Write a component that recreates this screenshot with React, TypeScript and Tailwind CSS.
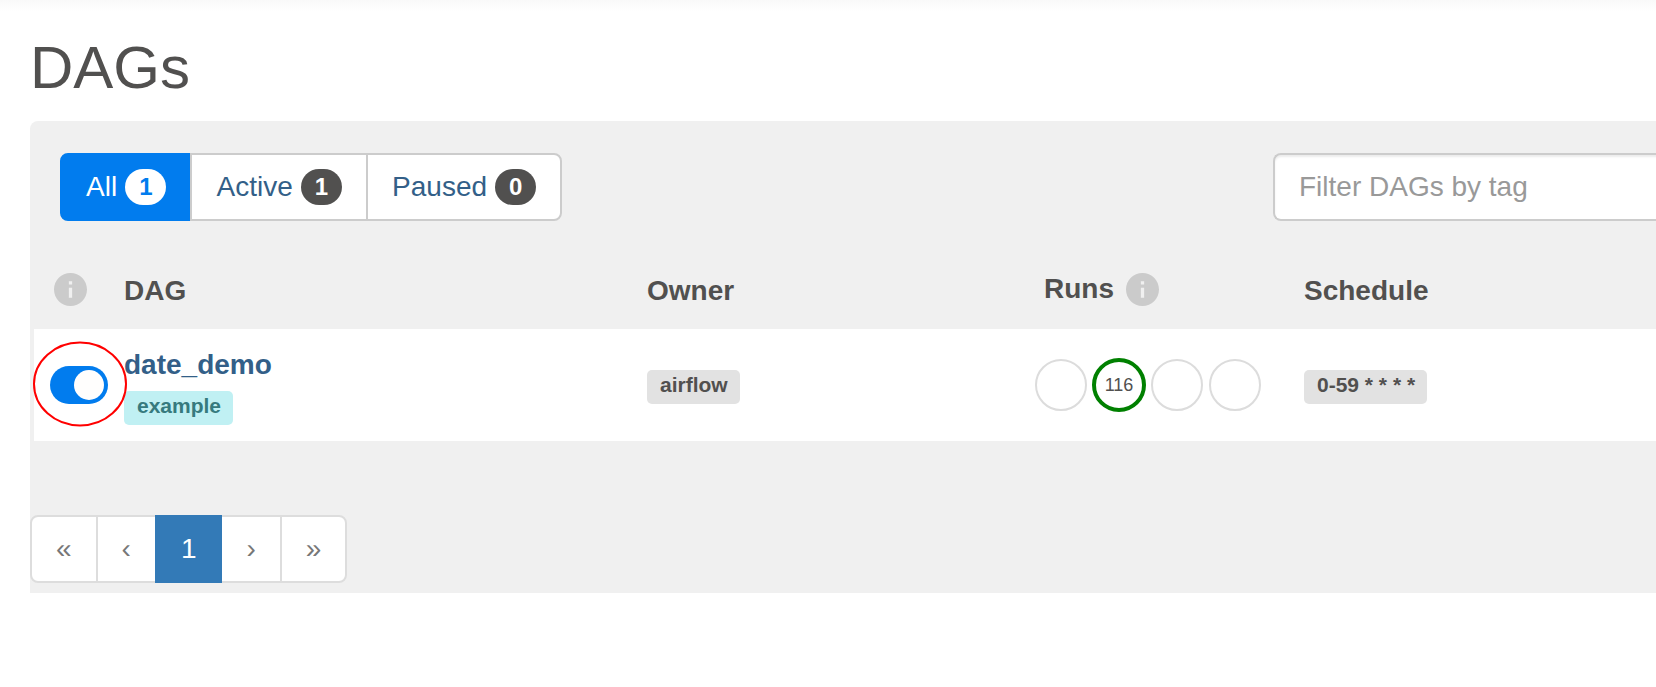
import { useState } from "react";

type Filter = { label: string; count: number };
type Run = { state: string; count?: number };

const filters: Filter[] = [
  { label: "All", count: 1 },
  { label: "Active", count: 1 },
  { label: "Paused", count: 0 },
];

const runs: Run[] = [
  { state: "queued" },
  { state: "success", count: 116 },
  { state: "running" },
  { state: "failed" },
];

function InfoIcon({ label }: { label: string }) {
  return (
    <svg role="img" aria-label={label} viewBox="2 2 20 20" className="size-[33px] shrink-0">
      <path
        fill="#cbcbcb"
        d="M12 2C6.48 2 2 6.48 2 12s4.48 10 10 10 10-4.48 10-10S17.52 2 12 2zm1 15h-2v-6h2v6zm0-8h-2V7h2v2z"
      />
    </svg>
  );
}

function FilterButtons() {
  const [selected, setSelected] = useState("All");
  return (
    <div className="flex">
      {filters.map(({ label, count }) => {
        const active = label === selected;
        return (
          <button
            key={label}
            type="button"
            onClick={() => setSelected(label)}
            className={
              "-ml-0.5 flex h-[68px] items-center gap-2 border-2 px-6 first:ml-0 first:rounded-l-lg last:rounded-r-lg " +
              (active
                ? "border-[#017cee] bg-[#017cee] text-white"
                : "border-[#ccc] bg-white text-[#335f88]")
            }
          >
            <span>{label}</span>
            <span
              className={
                "rounded-[20px] px-3.5 py-1.5 text-2xl/6 font-bold " +
                (active ? "bg-white text-[#017cee]" : "bg-[#51504f] text-white")
              }
            >
              {count}
            </span>
          </button>
        );
      })}
    </div>
  );
}

function Tag({ children, teal = false }: { children: string; teal?: boolean }) {
  return (
    <span
      className={
        "block w-fit rounded-[5px] pt-[3px] pr-3 pb-[7px] pl-[13px] text-[21px]/[24px] font-bold " +
        (teal ? "bg-[#c0f0f3] text-[#367a7e]" : "bg-[#e2e2e2] text-[#51504f]")
      }
    >
      {children}
    </span>
  );
}

function RunCircles() {
  return (
    <svg viewBox="0 0 232 56" className="h-14 w-[232px]" role="img" aria-label="Runs by state">
      {runs.map(({ state, count }, i) => (
        <g key={state}>
          <circle
            cx={26 + i * 58}
            cy="28"
            r="25"
            fill="none"
            stroke={count ? "#008000" : "#dcdcdc"}
            strokeWidth={count ? 4 : 2}
          />
          {count && (
            <text x={26 + i * 58} y="34" textAnchor="middle" fontSize="18" fill="#51504f">
              {count}
            </text>
          )}
        </g>
      ))}
    </svg>
  );
}

function PauseToggle() {
  return (
    <div className="relative ml-4 h-[38px] w-[58px]">
      <label className="block cursor-pointer">
        <input
          type="checkbox"
          defaultChecked
          aria-label="Pause or unpause date_demo"
          className="peer sr-only"
        />
        <span className="flex h-[38px] w-[58px] items-center rounded-full bg-[#cbcbcb] p-1 peer-checked:justify-end peer-checked:bg-[#017cee]">
          <span className="size-[30px] rounded-full bg-[#fffefd]" />
        </span>
      </label>
      <svg
        aria-hidden="true"
        viewBox="0 0 94 86"
        className="pointer-events-none absolute -top-[25px] -left-[17px] h-[86px] w-[94px] max-w-none"
      >
        <ellipse cx="47" cy="43" rx="46" ry="41.5" fill="none" stroke="#ff0000" strokeWidth="2" />
      </svg>
    </div>
  );
}

const pages = [
  { text: "«", label: "First page" },
  { text: "‹", label: "Previous page" },
  { text: "1", label: "Page 1" },
  { text: "›", label: "Next page" },
  { text: "»", label: "Last page" },
];

function Pagination() {
  return (
    <nav aria-label="Pagination" className="flex">
      {pages.map(({ text, label }) => (
        <a
          key={label}
          href="#"
          aria-label={label}
          className={
            "-ml-0.5 flex h-[68px] items-center border-2 px-6 first:ml-0 first:rounded-l-lg last:rounded-r-lg " +
            (text === "1"
              ? "relative z-10 border-[#337ab7] bg-[#337ab7] text-white"
              : "border-[#ddd] bg-white text-[#777]")
          }
        >
          {text}
        </a>
      ))}
    </nav>
  );
}

export default function App() {
  return (
    <div className="min-h-screen overflow-x-hidden bg-white font-['Liberation_Sans',Arial,sans-serif] text-[28px]/[40px] text-[#51504f]">
      <div className="h-3 bg-linear-to-b from-[#f9f9f9] to-white" />
      <main className="pl-[30px]">
        <h1 className="pt-[23px] pb-5 text-[60px]/[66px]">DAGs</h1>
        <section className="rounded-tl-lg bg-[#f0f0f0] pb-2.5">
          <div className="flex justify-between pt-8 pl-[30px]">
            <FilterButtons />
            <input
              type="text"
              aria-label="Filter DAGs by tag"
              placeholder="Filter DAGs by tag"
              className="-mr-1 h-[68px] w-[387px] rounded-l-lg border-2 border-r-0 border-[#ccc] bg-white px-6 shadow-[inset_0_2px_2px_rgba(0,0,0,0.075)] outline-none placeholder:text-[#999]"
            />
          </div>
          <div className="pt-7 pl-1">
            <table className="w-full table-fixed border-collapse text-left">
              <colgroup>
                <col className="w-[90px]" />
                <col className="w-[523px]" />
                <col className="w-[388px]" />
                <col className="w-[269px]" />
                <col />
              </colgroup>
              <thead>
                <tr className="h-20">
                  <th className="pl-5">
                    <InfoIcon label="Use this toggle to pause a DAG" />
                  </th>
                  <th className="pt-1">DAG</th>
                  <th className="pt-1">Owner</th>
                  <th className="pl-[9px]">
                    <span className="flex items-center gap-3">
                      Runs
                      <InfoIcon label="Status of all previous DAG runs" />
                    </span>
                  </th>
                  <th className="pt-1">Schedule</th>
                </tr>
              </thead>
              <tbody>
                <tr className="h-28 bg-white">
                  <td>
                    <PauseToggle />
                  </td>
                  <td>
                    <a href="#" className="block pb-1.5 font-bold text-[#335f88]">
                      date_demo
                    </a>
                    <Tag teal>example</Tag>
                  </td>
                  <td className="pt-1">
                    <Tag>airflow</Tag>
                  </td>
                  <td>
                    <RunCircles />
                  </td>
                  <td className="pt-1">
                    <Tag>0-59 * * * *</Tag>
                  </td>
                </tr>
              </tbody>
            </table>
          </div>
          <div className="pt-[74px]">
            <Pagination />
          </div>
        </section>
      </main>
    </div>
  );
}
